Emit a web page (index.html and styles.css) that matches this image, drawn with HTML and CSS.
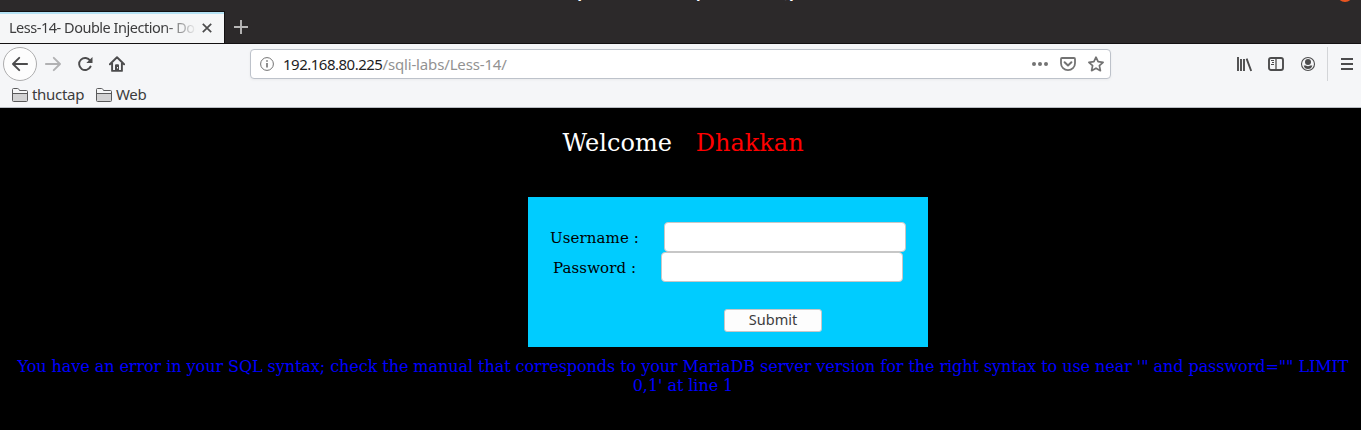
FILE: index.html
```html
<!DOCTYPE html>
<html lang="en">
<head>
<meta charset="utf-8">
<title>Less-14- Double Injection- Double quotes- String</title>
<link rel="stylesheet" href="styles.css">
</head>
<body>
<header class="tabbar">
  <div class="window-title"><span>Less-14- Double Injection- Double quotes- String - Mozilla Firefox</span></div>
  <div class="window-close"></div>
  <div class="tab">
    <span class="tab-title">Less-14- Double Injection- Double</span>
    <svg class="tab-close" width="10" height="10" viewBox="0 0 10 10"><path d="M.8.8l8.4 8.4M9.2.8L.8 9.2" stroke="#4c4c4d" stroke-width="1.7"/></svg>
  </div>
  <svg class="new-tab" width="14" height="14" viewBox="0 0 14 14"><path d="M7 0v14M0 7h14" stroke="#b8b7b7" stroke-width="1.9"/></svg>
</header>
<nav class="toolbar">
  <div class="nav-buttons">
    <span class="back"><svg width="16" height="16" viewBox="0 0 16 16"><path d="M15.2 8H1.5M7.2 1.8L1 8l6.2 6.2" class="line"/></svg></span>
    <svg class="forward" width="16" height="16" viewBox="0 0 16 16"><path d="M.8 8h13.7M8.8 1.8L15 8l-6.2 6.2" class="line"/></svg>
    <svg width="16" height="16" viewBox="0 0 16 16"><path d="M13.2 4.8A6 6 0 1 0 13.6 10.5" class="line"/><path d="M15.5 1v6H9.3z" fill="#4c4c4d"/></svg>
    <svg width="16" height="16" viewBox="0 0 16 16"><path d="M.9 8.3L8 1.3l7.1 7M3.1 7v7.9h9.8V7" class="line" stroke-linejoin="round"/><path fill-rule="evenodd" d="M6 15V9.3q0-1 1-1h2q1 0 1 1V15zM8 11v1.4h1V11z" fill="#4c4c4d"/></svg>
  </div>
  <div class="urlbar">
    <svg width="14" height="14" viewBox="0 0 14 14"><circle cx="7" cy="7" r="6.4" fill="none" stroke="#737373"/><path d="M7 6v4.5M7 3.2v1.6" stroke="#737373" stroke-width="1.6"/></svg>
    <span class="url"><b>192.168.80.225</b><i>/sqli-labs/Less-14/</i></span>
    <svg class="dots" width="16" height="16" viewBox="0 0 16 16" fill="#737373"><circle cx="2" cy="8" r="2"/><circle cx="8" cy="8" r="2"/><circle cx="14" cy="8" r="2"/></svg>
    <svg width="16" height="16" viewBox="0 0 16 16" fill="none" stroke="#737373" stroke-width="1.8"><path d="M2 2h12q1 0 1 1v4.2a7 7 0 0 1-14 0V3q0-1 1-1z"/><path d="M4.6 6.2L8 9.4l3.4-3.2" stroke-width="2" stroke-linecap="round" stroke-linejoin="round"/></svg>
    <svg width="16" height="16" viewBox="0 0 16 16" fill="none" stroke="#737373" stroke-width="1.7" stroke-linejoin="round"><path d="M8 1.2l2.1 4.5 5 .6-3.7 3.4 1 5L8 12.2l-4.4 2.5 1-5L.9 6.3l5-.6z"/></svg>
  </div>
  <div class="tools">
    <svg width="16" height="16" viewBox="0 0 16 16" stroke="#4c4c4d" stroke-width="1.9"><path d="M2 1v14M5 3v12M8 3v12M10.6 2.7L15.2 15"/></svg>
    <svg width="16" height="16" viewBox="0 0 16 16" fill="none" stroke="#4c4c4d"><rect x="1" y="2" width="14" height="12" rx="2" stroke-width="1.9"/><path d="M8 2v12" stroke-width="1.3"/><path d="M3 4.5h3M4 6.5h2M3 8.5h3"/></svg>
    <svg width="16" height="16" viewBox="0 0 16 16"><circle cx="8" cy="8" r="6.5" fill="none" stroke="#4c4c4d" stroke-width="1.1"/><circle cx="8" cy="6" r="3" fill="#4c4c4d"/><path d="M3.7 9.5h2.1Q8 11 10.2 9.5h2.1Q11.5 13 8 13T3.7 9.5z" fill="#4c4c4d"/></svg>
    <span class="divider"></span>
    <svg class="menu" width="12" height="12" viewBox="0 0 12 12"><path d="M0 1h12M0 6h12M0 11h12" stroke="#4c4c4d" stroke-width="1.9"/></svg>
  </div>
</nav>
<div class="bookmarks">
  <svg width="16" height="14" viewBox="0 0 16 14"><path d="M.5 12.5v-11q0-1 1-1h4q1 0 1.5 1l.5 1h7q1 0 1 1v9q0 1-1 1h-13q-1 0-1-1z" fill="#f5f6f7" stroke="#59595a"/><path d="M1 5.5h14V13H1z" fill="#d2d2d3"/><path d="M1 5.5h14" stroke="#59595a"/></svg>
  <span class="bm-first">thuctap</span>
  <svg width="16" height="14" viewBox="0 0 16 14"><path d="M.5 12.5v-11q0-1 1-1h4q1 0 1.5 1l.5 1h7q1 0 1 1v9q0 1-1 1h-13q-1 0-1-1z" fill="#f5f6f7" stroke="#59595a"/><path d="M1 5.5h14V13H1z" fill="#d2d2d3"/><path d="M1 5.5h14" stroke="#59595a"/></svg>
  <span class="bm-second">Web</span>
</div>
<main class="page">
  <h1 class="welcome">Welcome&nbsp;&nbsp;&nbsp;<span class="name">Dhakkan</span></h1>
  <form class="login">
    <label class="row user"><span>Username :</span><input type="text"></label>
    <label class="row pass"><span>Password :</span><input type="text"></label>
    <button class="submit" type="button">Submit</button>
  </form>
  <p class="error">You have an error in your SQL syntax; check the manual that corresponds to your MariaDB server version for the right syntax to use near '" and password="" LIMIT<br>0,1' at line 1</p>
</main>
</body>
</html>
```
FILE: styles.css
```css
* { box-sizing: border-box; }
body { margin: 0; height: 430px; overflow: hidden; background: #000; font: 15px/20px "Noto Sans", sans-serif; color: #3c3c3d; }
svg { display: block; flex: none; }
.line { fill: none; stroke: #4c4c4d; stroke-width: 1.9; stroke-linecap: round; stroke-linejoin: round; }

.tabbar { position: relative; display: flex; height: 44px; padding-top: 11px; background: #2c292a; border-bottom: 1px solid #131112; overflow: hidden; }
.window-title { position: absolute; left: 0; top: 0; width: 1361px; height: 1px; overflow: hidden; color: #fff; font-weight: 700; }
.window-title span { position: absolute; left: 446px; bottom: -3px; white-space: nowrap; letter-spacing: -.22px; }
.window-close { position: absolute; left: 1337px; top: -14px; width: 16px; height: 16px; border-radius: 50%; background: #e95420; }
.tab { display: flex; align-items: center; width: 225px; height: 33px; padding-left: 9px; background: #f5f6f7; border-top: 1px solid #131112; border-right: 1px solid #131112; box-shadow: inset 0 2px #b5e2f4; }
.tab-title { width: 187px; height: 20px; margin-top: -2px; overflow: hidden; white-space: nowrap; font-size: 14.5px; letter-spacing: -.48px; -webkit-mask-image: linear-gradient(90deg, #000 155px, transparent 188px); mask-image: linear-gradient(90deg, #000 155px, transparent 188px); }
.tab-close { margin-left: 6px; }
.new-tab { margin: 9px 0 0 9px; }

.toolbar { display: flex; height: 40px; background: #f5f6f8; }
.nav-buttons { display: flex; align-items: center; width: 250px; height: 40px; padding-left: 3px; gap: 16px; }
.back { display: flex; align-items: center; justify-content: center; width: 34px; height: 34px; margin-right: -8px; background: #fdfdfd; border: 1px solid #adadae; border-radius: 50%; }
.forward { opacity: .4; }
.urlbar { display: flex; align-items: center; width: 861px; height: 30px; margin-top: 5px; padding: 0 6px 0 9px; background: #fff; border: 1px solid #bdc2ca; border-radius: 4px; box-shadow: 0 1px 3px #0000000d; gap: 12px; }
.url { flex: 1; margin-left: -3px; font-size: 15px; letter-spacing: -.5px; white-space: nowrap; }
.url b { font-weight: 400; color: #1d1d1e; }
.url i { font-style: normal; color: #929292; letter-spacing: -.15px; }
.tools { display: flex; align-items: center; height: 40px; margin-left: 125px; gap: 16px; }
.divider { width: 1px; height: 34px; margin-left: -5px; background: #d3d5d8; }
.menu { margin-left: -3px; }

.bookmarks { display: flex; align-items: center; height: 24px; padding: 0 0 2px 12px; background: #f5f6f8; border-bottom: 1px solid #b9bdc3; letter-spacing: -.3px; }
.bm-first { width: 64px; padding-left: 4px; margin: -2px 4px 0 0; }
.bm-second { padding-left: 4px; margin-top: -2px; }

.page { height: 322px; font-family: "DejaVu Serif", serif; text-align: center; }
.welcome { margin: 0 0 0 5px; padding-top: 21px; font-size: 24px; line-height: 28px; font-weight: 400; color: #fff; }
.name { margin-left: 1px; color: #f00; }
.login { width: 400px; height: 150px; margin: 40px 0 0 528px; padding-top: 25px; background: #0cf; }
.row { display: flex; align-items: center; height: 30px; font-size: 15px; color: #000; text-align: left; white-space: nowrap; }
.row span { padding-top: 2px; letter-spacing: .1px; }
.row input { width: 242px; height: 30px; padding: 0; background: #fff; border: 1px solid #c7c7c7; border-radius: 4px; }
.user { padding-left: 22px; }
.user span { width: 114px; }
.pass { padding-left: 25px; }
.pass span { width: 108px; }
.submit { display: block; width: 98px; height: 23px; margin: 27px 0 0 196px; padding: 0 0 2px; background: #fdfdfd; border: 1px solid #c7c7c7; border-radius: 3px; color: #3c3c3d; font: 14.5px/19px "Noto Sans", sans-serif; }
.error { margin: 10px 0 0 5px; font-size: 16px; line-height: 19px; letter-spacing: -.055px; color: #00f; white-space: nowrap; }
```
